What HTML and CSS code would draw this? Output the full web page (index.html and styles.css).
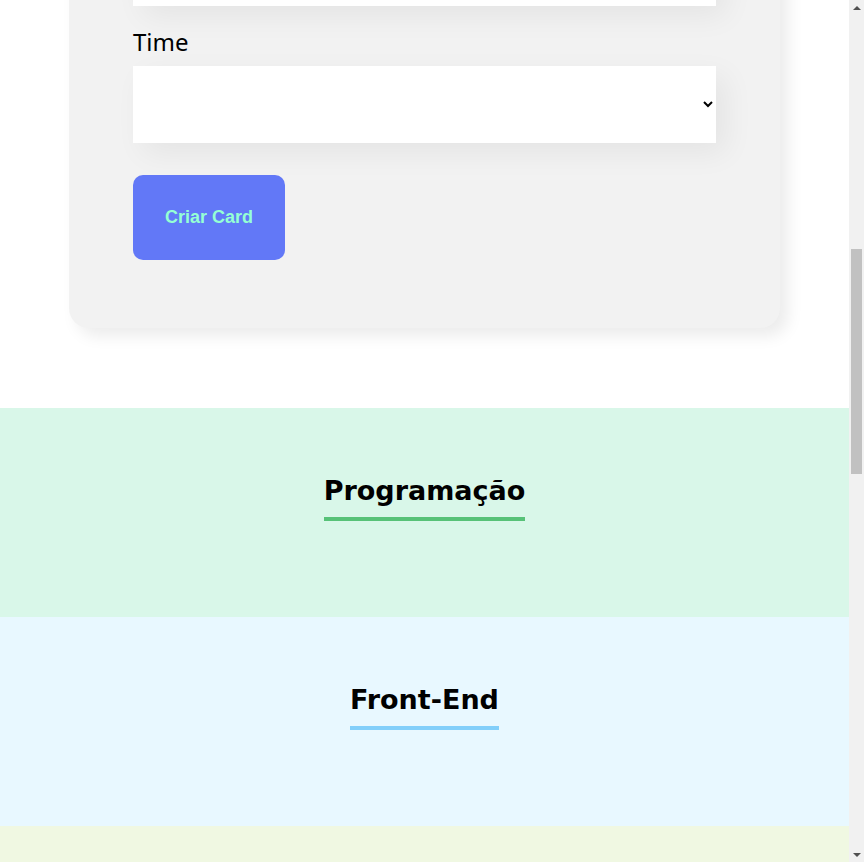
FILE: index.html
```html
<!DOCTYPE html>
<html lang="pt-br">
<head>
<meta charset="utf-8">
<title>Organo</title>
<link rel="stylesheet" href="styles.css">
</head>
<body>
<div class="pagina">
  <section class="formulario">
    <form class="form-card">
      <div class="campo">
        <input class="campo-input" type="text" aria-label="Imagem">
      </div>
      <div class="campo">
        <label class="campo-label">Time</label>
        <select class="campo-select">
          <option value=""></option>
          <option>Programação</option>
          <option>Front-End</option>
          <option>Data Science</option>
          <option>Devops</option>
          <option>UX e Design</option>
          <option>Mobile</option>
          <option>Inovação e Gestão</option>
        </select>
      </div>
      <button class="botao" type="button">Criar Card</button>
    </form>
  </section>
  <section class="time time-programacao"><h3 class="time-titulo">Programação</h3></section>
  <section class="time time-frontend"><h3 class="time-titulo">Front-End</h3></section>
  <section class="time-faixa time-datascience"></section>
</div>
<div class="barra-rolagem" aria-hidden="true">
  <div class="barra-seta barra-seta-cima"></div>
  <div class="barra-trilho"><div class="barra-polegar"></div></div>
  <div class="barra-seta barra-seta-baixo"></div>
</div>
</body>
</html>
```
FILE: styles.css
```css
html, body {
  margin: 0;
  overflow: hidden;
}
body {
  font-family: "Noto Sans", "Liberation Sans", sans-serif;
  color: #000;
  background: #fff;
}
.pagina {
  margin-right: 15px;
}
.formulario {
  margin: -107px 0 80px;
  display: flex;
  justify-content: center;
}
.form-card {
  box-sizing: border-box;
  width: 711px;
  padding: 36px 64px 68px;
  background: #f2f2f2;
  border-radius: 20px;
  box-shadow: 8px 8px 16px rgba(0, 0, 0, 0.08);
}
.campo {
  margin: 0 0 19px;
}
.campo-label {
  display: block;
  margin-bottom: 8px;
  font-size: 24px;
}
.campo-input,
.campo-select {
  display: block;
  box-sizing: border-box;
  width: 100%;
  height: 77px;
  padding: 24px;
  border: none;
  background: #fff;
  font-family: "Noto Sans", sans-serif;
  font-size: 24px;
  color: #000;
  box-shadow: 10px 10px 30px rgba(0, 0, 0, 0.06);
  outline: none;
}
.botao {
  margin-top: 13px;
  padding: 32px;
  border: none;
  border-radius: 10px;
  background: #6278f7;
  color: #95ffd4;
  font-family: "Liberation Sans", Arial, sans-serif;
  font-size: 18px;
  font-weight: bold;
  line-height: 21px;
  cursor: pointer;
}
.time {
  padding: 67px 32px 96px;
  text-align: center;
}
.time-titulo {
  display: inline-block;
  margin: 0;
  padding-bottom: 11px;
  border-bottom: 4px solid;
  font-family: "DejaVu Sans", sans-serif;
  font-weight: bold;
  font-size: 27px;
  line-height: 31px;
  color: #000;
}
.time-faixa {
  height: 36px;
}
.time-programacao { background: #d9f7e9; }
.time-programacao .time-titulo { border-color: #57c278; }
.time-frontend { background: #e8f8ff; }
.time-frontend .time-titulo { border-color: #82cffa; }
.time-datascience { background: #f0f8e2; }

.barra-rolagem {
  position: fixed;
  top: 0;
  right: 0;
  width: 15px;
  height: 100%;
  background: #f1f1f1;
  display: flex;
  flex-direction: column;
}
.barra-seta {
  height: 15px;
  display: flex;
  align-items: center;
  justify-content: center;
}
.barra-seta::before {
  content: "";
  width: 0;
  height: 0;
  border-left: 4px solid transparent;
  border-right: 4px solid transparent;
}
.barra-seta-cima::before {
  border-bottom: 4px solid #505050;
}
.barra-seta-baixo::before {
  border-top: 4px solid #505050;
}
.barra-trilho {
  flex: 1;
  display: flex;
  flex-direction: column;
  align-items: center;
}
.barra-polegar {
  margin-top: 234px;
  width: 11px;
  height: 225px;
  background: #c1c1c1;
}
```
